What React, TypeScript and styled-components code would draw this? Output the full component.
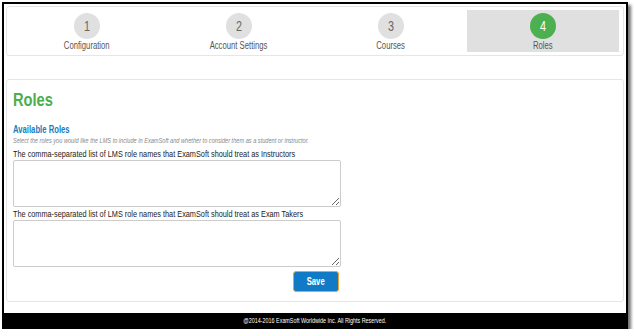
import styled, { createGlobalStyle } from 'styled-components';

const GlobalStyle = createGlobalStyle`
    html, body {
        margin: 0;
        padding: 0;
        background: #fff;
        font-family: "Liberation Sans", Arial, sans-serif;
    }
`

const steps = [
    { num: 1, label: 'Configuration' },
    { num: 2, label: 'Account Settings' },
    { num: 3, label: 'Courses' },
    { num: 4, label: 'Roles' },
];

export default function App() {
    return (
        <>
            <GlobalStyle />
            <Frame>
                <Body>
                    <StepCard>
                        {steps.map((s) => (
                            <Step key={s.num} $active={s.num === 4}>
                                <Circle $active={s.num === 4}><Narrow $center>{s.num}</Narrow></Circle>
                                <StepLabel><Narrow $center>{s.label}</Narrow></StepLabel>
                            </Step>
                        ))}
                    </StepCard>

                    <MainCard>
                        <Heading><Narrow>Roles</Narrow></Heading>
                        <SubHeading><Narrow>Available Roles</Narrow></SubHeading>
                        <Hint><Narrow>Select the roles you would like the LMS to include in ExamSoft and whether to consider them as a student or instructor.</Narrow></Hint>
                        <Form>
                            <FieldLabel><Narrow>The comma-separated list of LMS role names that ExamSoft should treat as Instructors</Narrow></FieldLabel>
                            <Area />
                            <FieldLabel><Narrow>The comma-separated list of LMS role names that ExamSoft should treat as Exam Takers</Narrow></FieldLabel>
                            <Area />
                            <Actions>
                                <SaveBtn><Narrow $center>Save</Narrow></SaveBtn>
                            </Actions>
                        </Form>
                    </MainCard>
                </Body>
                <Footer><Narrow $center>@2014-2016 ExamSoft Worldwide Inc. All Rights Reserved.</Narrow></Footer>
            </Frame>
        </>
    );
}

// the screenshot text is horizontally condensed, like Arial Narrow
const Narrow = styled.span<{ $center?: boolean }>`
    display: inline-block;
    white-space: nowrap;
    transform: scaleX(0.77);
    transform-origin: ${(p) => (p.$center ? 'center' : 'left')} center;
`

const Frame = styled.div`
    box-sizing: border-box;
    margin: 2px 0 0 2px;
    width: 626px;
    height: 327px;
    border: 2px solid #000;
    background: #fff;
    box-shadow: 3px 3px 3px rgba(0, 0, 0, 0.55);
    display: flex;
    flex-direction: column;
`

const Body = styled.div`
    flex: 1;
    padding: 2px 0 0 2px;
    display: flex;
    flex-direction: column;
    gap: 23px;
`

const StepCard = styled.div`
    box-sizing: border-box;
    width: 618px;
    height: 50px;
    border: 1px solid #e6e6e6;
    border-radius: 3px;
    padding: 3px 4px;
    display: grid;
    grid-template-columns: repeat(4, 1fr);
`

const Step = styled.div<{ $active?: boolean }>`
    background: ${(p) => (p.$active ? '#e0e0e0' : 'transparent')};
    display: flex;
    flex-direction: column;
    align-items: center;
    padding-top: 3px;
`

const Circle = styled.div<{ $active?: boolean }>`
    width: 26px;
    height: 26px;
    border-radius: 50%;
    background: ${(p) => (p.$active ? '#4caf50' : '#e0e0e0')};
    color: ${(p) => (p.$active ? '#fff' : '#666')};
    font-size: 14px;
    display: flex;
    align-items: center;
    justify-content: center;
`

const StepLabel = styled.div`
    margin-top: 1px;
    font-size: 10px;
    color: #555;
`

const MainCard = styled.div`
    box-sizing: border-box;
    width: 618px;
    height: 223px;
    border: 1px solid #e6e6e6;
    border-radius: 3px;
    padding: 9px 6px 0 6px;
`

const Heading = styled.h1`
    margin: 0;
    font-size: 19px;
    font-weight: bold;
    color: #4cae4c;
    line-height: 22px;
`

const SubHeading = styled.div`
    margin-top: 13px;
    font-size: 10px;
    font-weight: bold;
    color: #1a7bc0;
`

const Hint = styled.div`
    margin-top: 1px;
    font-size: 7.3px;
    font-style: italic;
    color: #888;
`

const Form = styled.div`
    width: 328px;
    margin-top: 3px;
    display: flex;
    flex-direction: column;
`

const FieldLabel = styled.div`
    font-size: 9.5px;
    color: #222;
    line-height: 11px;
`

const Area = styled.textarea`
    box-sizing: border-box;
    width: 328px;
    height: 47px;
    margin: 1px 0 1px 0;
    border: 1px solid #ccc;
    border-radius: 2px;
    resize: vertical;
`

const Actions = styled.div`
    display: flex;
    justify-content: flex-end;
    margin-top: 3px;
`

const SaveBtn = styled.button`
    box-sizing: border-box;
    width: 46px;
    height: 21px;
    padding: 0;
    background: #117ac6;
    color: #fff;
    border: 1px solid #f0a22e;
    border-radius: 3px;
    font-family: "Liberation Sans", Arial, sans-serif;
    font-size: 10px;
    font-weight: bold;
    margin-right: 2px;
`

const Footer = styled.div`
    height: 14px;
    background: #000;
    color: #fff;
    font-size: 7px;
    display: flex;
    align-items: center;
    justify-content: center;
`
